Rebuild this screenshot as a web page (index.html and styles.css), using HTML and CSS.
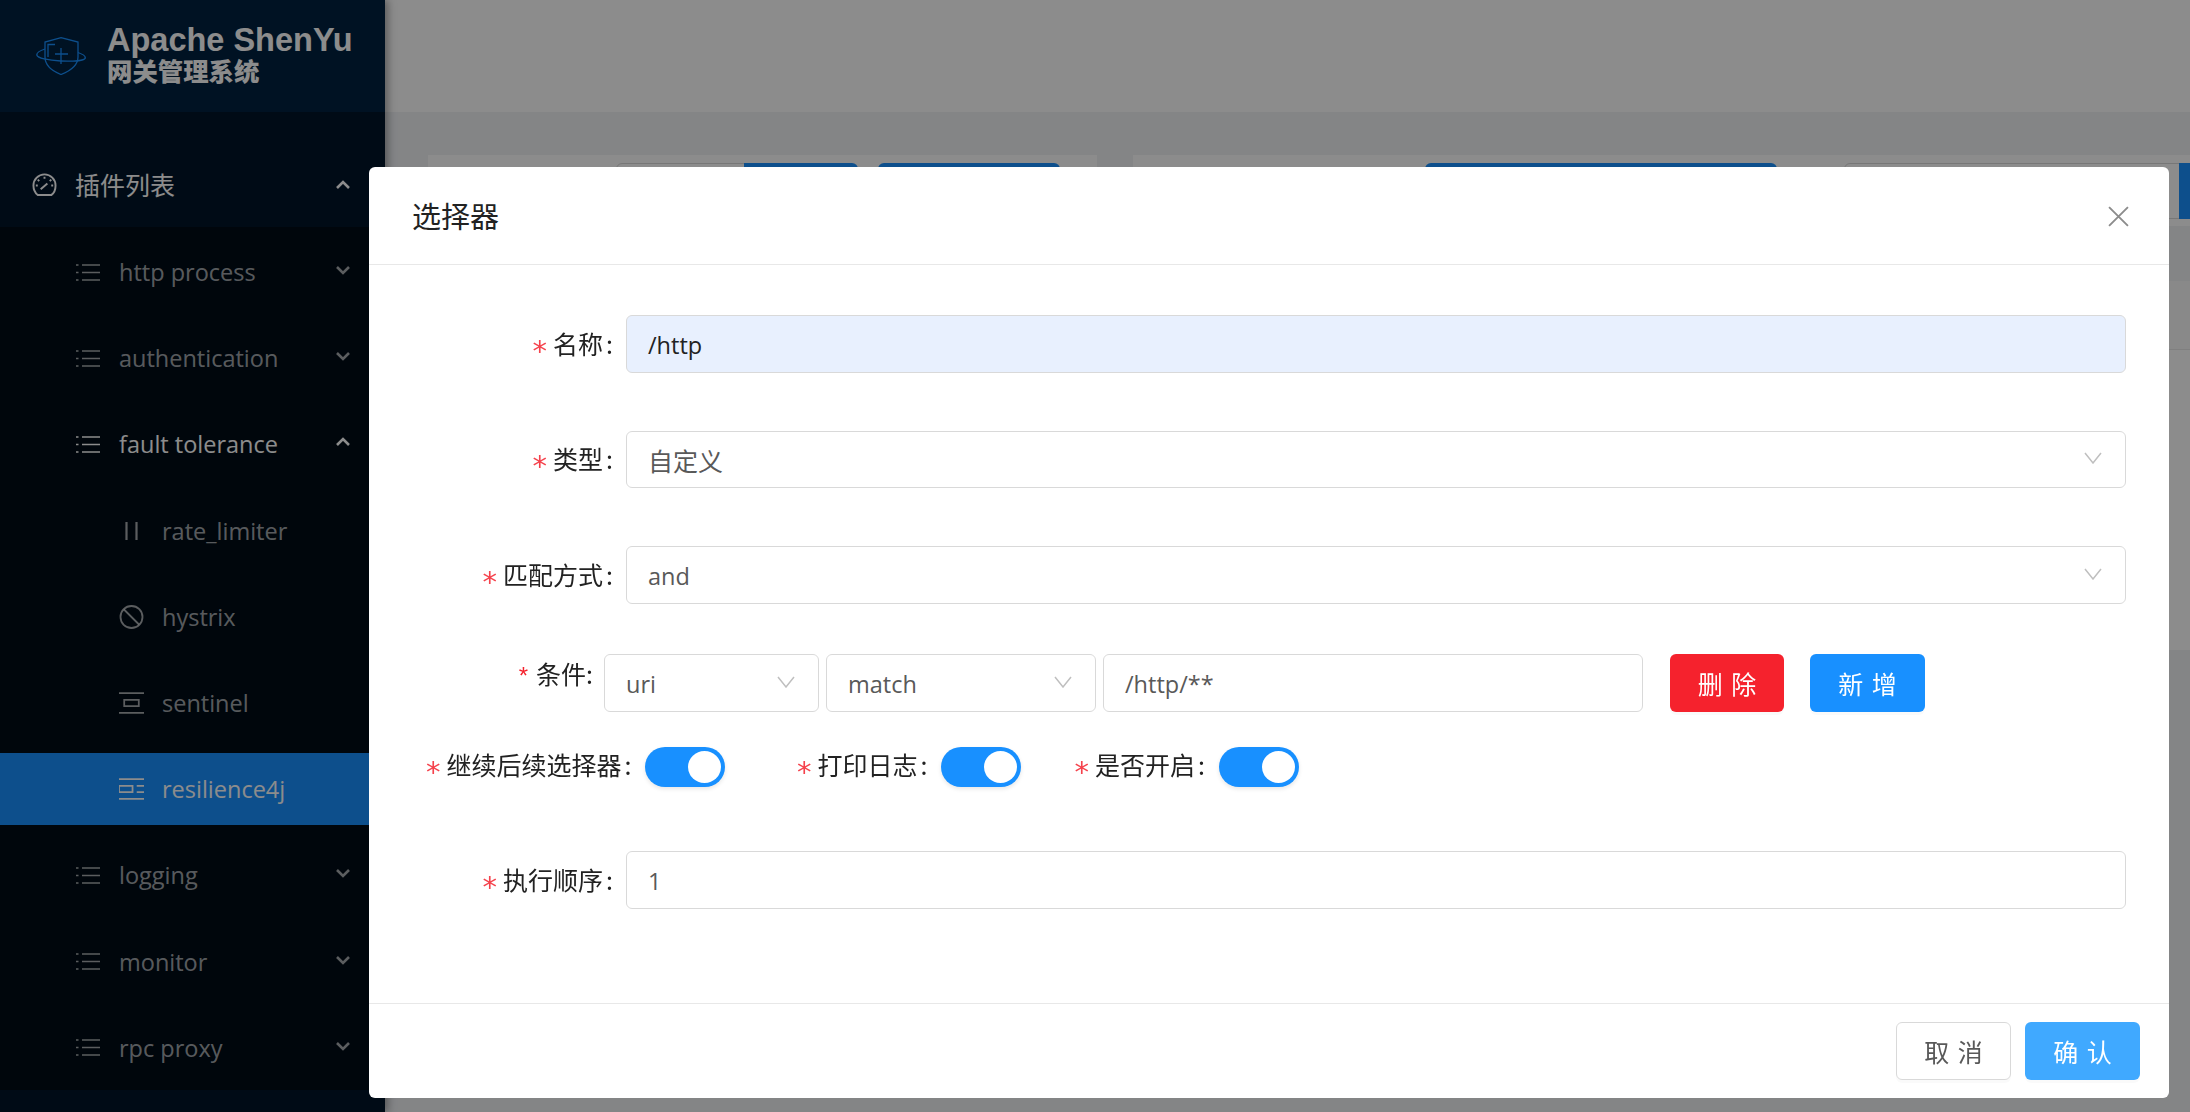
FILE: index.html
```html
<!DOCTYPE html>
<html lang="zh">
<head>
<meta charset="utf-8">
<title>Apache ShenYu</title>
<link rel="stylesheet" href="styles.css">
</head>
<body>
<div class="app">
  <aside class="sider">
    <div class="logo">
      <svg class="logo-icon" viewBox="0 0 50 38" fill="none" stroke="#1890ff" stroke-width="1.300"><path d="M25 .7L42 5v15c0 8-8 14-17 17.500C16 34 9 28 9 20V5z"/><path d="M9 12C3 14 .5 16 .8 18c.7 3 11 5.500 24 6s24-.5 24.500-3c.3-2-3-4-7.300-5.500"/><path d="M12 20V7.500h7M19 17h13M25 11v16"/></svg>
      <div class="logo-text"><div class="logo-title">Apache ShenYu</div><div class="logo-sub">网关管理系统</div></div>
    </div>
    <nav class="menu">
      <div class="item root"><svg class="ic gauge" viewBox="0 0 26 26" fill="none" stroke="currentColor" stroke-width="2"><path d="M6 24C3 21.500 1.500 18 1.500 14a11.500 11.500 0 0 1 23 0c0 4-1.500 8-4.500 10z"/><path d="M9 18l7-6M13 5v2M6 8l1.500 1.500M20 8l-1.500 1.500M4 14h2M20 14h2"/></svg><span>插件列表</span><svg class="chev" viewBox="0 0 16 10"><path d="M2 8l6-6 6 6"/></svg></div>
      <div class="sub">
        <div class="item"><svg class="ic" viewBox="0 0 24 18"><use href="#list"/></svg><span>http process</span><svg class="chev" viewBox="0 0 16 10"><path d="M2 2l6 6 6-6"/></svg></div>
        <div class="item"><svg class="ic" viewBox="0 0 24 18"><use href="#list"/></svg><span>authentication</span><svg class="chev" viewBox="0 0 16 10"><path d="M2 2l6 6 6-6"/></svg></div>
        <div class="item bright"><svg class="ic" viewBox="0 0 24 18"><use href="#list"/></svg><span>fault tolerance</span><svg class="chev" viewBox="0 0 16 10"><path d="M2 8l6-6 6 6"/></svg></div>
        <div class="item leaf"><svg class="ic" viewBox="0 0 24 24" fill="none" stroke="currentColor" stroke-width="2.200"><path d="M7 3v18M17 3v18"/></svg><span>rate_limiter</span></div>
        <div class="item leaf"><svg class="ic" viewBox="0 0 24 24" fill="none" stroke="currentColor" stroke-width="1.800"><circle cx="12" cy="12" r="11"/><path d="M4.500 4.500l15 15"/></svg><span>hystrix</span></div>
        <div class="item leaf"><svg class="ic" viewBox="0 0 24 22" fill="none" stroke="currentColor" stroke-width="1.700"><path d="M0 1.500h24M0 20.500h24M5 8h14v6H5z"/></svg><span>sentinel</span></div>
        <div class="item leaf active"><svg class="ic" viewBox="0 0 24 22" fill="none" stroke="currentColor" stroke-width="1.700"><path d="M0 1.500h24M0 20.500h24M0 8h13v6H0zM17 8h7M17 14h7"/></svg><span>resilience4j</span></div>
        <div class="item"><svg class="ic" viewBox="0 0 24 18"><use href="#list"/></svg><span>logging</span><svg class="chev" viewBox="0 0 16 10"><path d="M2 2l6 6 6-6"/></svg></div>
        <div class="item"><svg class="ic" viewBox="0 0 24 18"><use href="#list"/></svg><span>monitor</span><svg class="chev" viewBox="0 0 16 10"><path d="M2 2l6 6 6-6"/></svg></div>
        <div class="item"><svg class="ic" viewBox="0 0 24 18"><use href="#list"/></svg><span>rpc proxy</span><svg class="chev" viewBox="0 0 16 10"><path d="M2 2l6 6 6-6"/></svg></div>
      </div>
    </nav>
  </aside>
  <main class="content">
    <div class="topbar"></div>
    <div class="cards">
      <div class="card c1"><div class="ghost g1"></div><div class="pill p1"></div><div class="pill p2"></div></div>
      <div class="card c2"><div class="pill p3"></div><div class="ghost g2"></div><div class="pill p4"></div></div>
    </div>
    <div class="table"><div class="thead"></div></div>
  </main>
</div>
<svg class="defs" width="0" height="0"><defs><g id="list" stroke="currentColor" stroke-width="1.700" fill="none"><path d="M6 1.500h18M6 9h18M6 16.500h18"/><path d="M0 1.500h2.500M0 9h2.500M0 16.500h2.500"/></g></defs></svg>
<div class="mask"></div>
<section class="modal">
  <header class="m-head"><h2>选择器</h2><svg class="close" viewBox="0 0 20 20" fill="none" stroke="#8c8c8c" stroke-width="1.800"><path d="M1 1l18 18M19 1L1 19"/></svg></header>
  <div class="m-body">
    <div class="row"><label class="lab"><i>*</i>名称<span class="colon">:</span></label><div class="field filled">/http</div></div>
    <div class="row"><label class="lab"><i>*</i>类型<span class="colon">:</span></label><div class="field"><span class="cjk">自定义</span><svg class="arrow" viewBox="0 0 18 12"><path d="M1 1l8 10 8-10"/></svg></div></div>
    <div class="row tight"><label class="lab"><i>*</i>匹配方式<span class="colon">:</span></label><div class="field">and<svg class="arrow" viewBox="0 0 18 12"><path d="M1 1l8 10 8-10"/></svg></div></div>
    <div class="cond">
      <label class="lab2"><i>*</i>条件:</label>
      <div class="field f1">uri<svg class="arrow" viewBox="0 0 18 12"><path d="M1 1l8 10 8-10"/></svg></div>
      <div class="field f2">match<svg class="arrow" viewBox="0 0 18 12"><path d="M1 1l8 10 8-10"/></svg></div>
      <div class="field f3">/http/**</div>
      <button class="btn red">删 除</button>
      <button class="btn blue">新 增</button>
    </div>
    <div class="switches">
      <div class="sw-item s1"><label><i>*</i>继续后续选择器<span class="colon">:</span></label><span class="switch"></span></div>
      <div class="sw-item s2"><label><i>*</i>打印日志<span class="colon">:</span></label><span class="switch"></span></div>
      <div class="sw-item s3"><label><i>*</i>是否开启<span class="colon">:</span></label><span class="switch"></span></div>
    </div>
    <div class="row last"><label class="lab"><i>*</i>执行顺序<span class="colon">:</span></label><div class="field num">1</div></div>
  </div>
  <footer class="m-foot"><button class="btn plain">取 消</button><button class="btn ok">确 认</button></footer>
</section>
</body>
</html>
```
FILE: styles.css
```css
* { box-sizing: border-box; }
html, body { margin: 0; height: 100%; overflow: hidden; }
body { font-family: "Open Sans", "Noto Sans CJK SC", sans-serif; font-size: 23.500px; color: #333; background: #f0f2f5; }
.defs { position: absolute; }
.app { display: flex; height: 1112px; }
.sider { width: 385px; flex: none; background: #001529; box-shadow: 3px 0 8px rgba(0,0,0,.35); position: relative; z-index: 1; }
.logo { height: 112px; display: flex; align-items: center; padding: 0 0 2px 36px; gap: 21px; background: #002140; }
.logo-icon { width: 50px; height: 38px; flex: none; margin-top: 2px; }
.logo-title { font-family: "Liberation Sans", sans-serif; font-weight: 700; font-size: 32.500px; line-height: 30px; color: #fff; }
.logo-sub { font-family: "Noto Sans CJK SC", sans-serif; font-weight: 900; font-size: 25.400px; line-height: 30px; color: #fff; }
.menu { padding-top: 38px; }
.item { height: 72px; display: flex; align-items: center; color: rgba(255,255,255,.65); position: relative; font-size: 23.500px; }
.item .ic { width: 24px; height: 19px; margin-right: 19px; flex: none; fill: none; }
.root { height: 77px; padding: 0 0 9px 32px; font-size: 25px; font-family: "Noto Sans CJK SC", sans-serif; color: #fff; }
.root .ic.gauge { width: 25px; height: 25px; margin-right: 18px; }
.sub { background: #000c17; padding: 9px 0 6px; width: 385px; }
.sub .item { height: 72px; margin-bottom: 14.200px; padding-left: 76px; }
.sub .item:last-child { margin-bottom: 0; }
.sub .item.leaf { padding-left: 119px; }
.sub .item.leaf .ic { width: 25px; height: 24px; margin-right: 18px; }
.sub .item.active { background: #1890ff; color: #fff; }
.sub .item.bright { color: #fff; }
.chev { position: absolute; right: 34px; top: 50%; width: 16px; height: 10px; margin-top: -7px; fill: none; stroke: currentColor; stroke-width: 2.600; }
.root .chev { margin-top: -9px; }
.content { flex: 1; min-width: 0; }
.topbar { height: 112px; background: #fff; }
.cards { display: flex; gap: 36px; padding: 43px 0 0 43px; }
.card { height: 71px; background: #fff; position: relative; }
.c1 { width: 669px; }
.c2 { flex: 1; }
.ghost { position: absolute; top: 8px; height: 56px; border: 1.500px solid #d9d9d9; border-radius: 6px; background: #fff; }
.pill { position: absolute; top: 8px; height: 56px; background: #1890ff; border-radius: 6px; }
.g1 { left: 188px; width: 140px; }
.p1 { left: 316px; width: 114px; border-radius: 0 6px 6px 0; }
.p2 { left: 450px; width: 182px; }
.p3 { left: 292px; width: 352px; }
.g2 { left: 711px; width: 345px; }
.p4 { left: 1046px; width: 11px; border-radius: 0; }
.table { margin: 55px 0 0 43px; height: 369px; background: #fff; }
.thead { height: 69px; background: #fafafa; border-bottom: 1.500px solid #e8e8e8; }
.mask { position: fixed; inset: 0; background: rgba(0,0,0,.45); z-index: 5; }
.modal { position: fixed; left: 369px; top: 167px; width: 1800px; height: 931px; background: #fff; border-radius: 6px; z-index: 6; display: flex; flex-direction: column; }
.m-head { height: 98px; flex: none; border-bottom: 1.500px solid #e8e8e8; display: flex; align-items: center; justify-content: space-between; padding: 0 40px 0 43px; }
.m-head h2 { margin: 0 0 2px; font-family: "Noto Sans CJK SC", sans-serif; font-weight: 400; font-size: 29px; color: #222; }
.close { width: 21px; height: 21px; margin-top: 2px; }
.m-body { flex: 1; padding: 50px 43px 0 0; position: relative; }
.row { display: flex; height: 57.500px; margin-bottom: 58px; align-items: center; }
.row.tight { margin-bottom: 50.500px; }
.row.last { margin-bottom: 0; }
.lab { width: 257px; flex: none; text-align: right; padding-top: 3px; font-family: "Noto Sans CJK SC", sans-serif; font-size: 25px; color: #222; white-space: nowrap; }
.colon { margin: 0 13px 0 3px; }
.lab i, .sw-item i { font-family: "DejaVu Sans", sans-serif; font-style: normal; color: #f5424c; font-size: 29px; line-height: 1; font-weight: 400; margin-right: 6px; vertical-align: -7px; }
.lab2 i { font-family: "Liberation Sans", sans-serif; font-style: normal; color: #f5222d; font-size: 24px; margin-right: 8px; }
.field { flex: 1; height: 57.500px; border: 1.500px solid #d9d9d9; border-radius: 6px; display: flex; align-items: center; padding: 2px 16px 0 21px; font-size: 23.500px; color: #595959; position: relative; background: #fff; }
.cjk { font-size: 25px; font-family: "Noto Sans CJK SC", sans-serif; }
.filled { background: #e8f0fe; color: #222; }
.arrow { position: absolute; right: 23px; top: 50%; margin-top: -7px; width: 18px; height: 12px; fill: none; stroke: #bfbfbf; stroke-width: 1.500; }
.cond { display: flex; height: 57.500px; margin-bottom: 35.500px; align-items: center; }
.lab2 { width: 235px; flex: none; text-align: right; padding-right: 11px; font-family: "Noto Sans CJK SC", sans-serif; font-size: 25px; color: #222; margin-bottom: 20px; white-space: nowrap; }
.f1 { flex: none; width: 215px; margin-right: 7px; }
.f2 { flex: none; width: 270px; margin-right: 7px; }
.f3 { flex: none; width: 540px; }
.btn { height: 57.500px; border: 0; border-radius: 6px; font-family: "Noto Sans CJK SC", sans-serif; font-size: 25px; word-spacing: 3px; color: #fff; cursor: pointer; box-shadow: 0 3px 0 rgba(0,0,0,.02); }
.red { width: 114px; background: #f5222d; margin-left: 27px; }
.blue { width: 115px; background: #1890ff; margin-left: 26px; }
.switches { display: flex; height: 40px; align-items: center; }
.sw-item { display: flex; align-items: center; font-family: "Noto Sans CJK SC", sans-serif; font-size: 25px; color: #222; white-space: nowrap; }
.sw-item label { margin-bottom: 1px; }
.sw-item .colon { margin-right: 14px; }
.s1 { margin-left: 57px; }
.s2 { margin-left: 71.500px; }
.s3 { margin-left: 53px; }
.switch { width: 80px; height: 40px; border-radius: 20px; background: #1890ff; position: relative; display: block; box-shadow: 0 2px 4px rgba(0,0,0,.1); }
.switch::after { content: ""; position: absolute; top: 4px; right: 4px; width: 33px; height: 32px; border-radius: 50%; background: #fff; }
.switches + .row { margin-top: 64px; }
.num { height: 58px; }
.m-foot { height: 95px; flex: none; border-top: 1.500px solid #e8e8e8; display: flex; justify-content: flex-end; align-items: center; padding: 0 29px 0 0; gap: 14px; }
.plain { width: 115px; background: #fff; border: 1.500px solid #d9d9d9; color: #595959; }
.ok { width: 115px; background: #40a9ff; }
```
